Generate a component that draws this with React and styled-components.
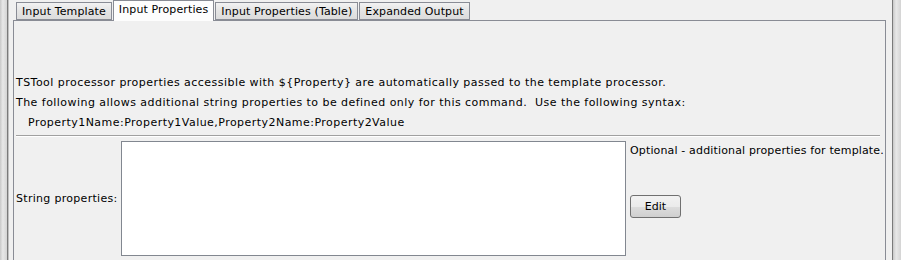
import React from "react";
import styled, { createGlobalStyle } from "styled-components";

const Global = createGlobalStyle`
  html, body {
    margin: 0;
    padding: 0;
    background: #f0f0f0;
  }
  body {
    font-family: "DejaVu Sans", "Liberation Sans", sans-serif;
    font-size: 11px;
    letter-spacing: 0.46px;
    color: #000;
  }
`;

const Frame = styled.div`
  display: flex;
  width: 901px;
  height: 260px;
  overflow: hidden;
  background: #f0f0f0;
`;

const EdgeStrip = styled.div`
  width: ${(p) => p.$w}px;
  flex: none;
  background: linear-gradient(to right, #c8c8c8, #e8e8e8 40%, #d4d4d4);
  border-${(p) => (p.$side === "left" ? "right" : "left")}: 1px solid #7a7a7a;
`;

const Gutter = styled.div`
  width: ${(p) => p.$w}px;
  flex: none;
  border-left: 1px solid #c0c0c0;
`;

const Main = styled.div`
  flex: 1;
  display: flex;
  flex-direction: column;
  min-width: 0;
`;

const TabBar = styled.div`
  display: flex;
  align-items: flex-end;
  height: 20px;
  padding-left: 3px;
  gap: 1px;
`;

const Tab = styled.div`
  box-sizing: border-box;
  height: ${(p) => (p.$active ? 21 : 18)}px;
  padding: 0 5px;
  display: flex;
  align-items: ${(p) => (p.$active ? "flex-start" : "center")};
  padding-top: ${(p) => (p.$active ? 2 : 0)}px;
  border: 1px solid #898c95;
  border-bottom: ${(p) => (p.$active ? "none" : "1px solid #898c95")};
  background: ${(p) =>
    p.$active ? "#fdfdfd" : "linear-gradient(#f2f2f2, #e4e4e4 50%, #dcdcdc)"};
  margin-bottom: ${(p) => (p.$active ? -1 : 0)}px;
  position: relative;
  z-index: ${(p) => (p.$active ? 1 : 0)};
  white-space: nowrap;
  letter-spacing: 0.12px;
`;

const Panel = styled.div`
  flex: 1;
  border: 1px solid #898c95;
  border-bottom: none;
  padding: 52px 3px 0 2px;
  display: flex;
  flex-direction: column;
  margin-right: 6px;
`;

const Line = styled.div`
  line-height: 20px;
  height: 20px;
  padding-left: ${(p) => p.$indent || 0}px;
  white-space: nowrap;
`;

const Separator = styled.div`
  height: 0;
  border-top: 1px solid #a0a0a0;
  border-bottom: 1px solid #ffffff;
  margin: 2px 2px 4px 0;
`;

const FieldRow = styled.div`
  display: flex;
  align-items: stretch;
`;

const Label = styled.div`
  flex: none;
  width: 105px;
  display: flex;
  align-items: center;
  white-space: nowrap;
  letter-spacing: 0.3px;
`;

const TextArea = styled.textarea`
  flex: none;
  width: 505px;
  height: 115px;
  box-sizing: border-box;
  border: 1px solid #828790;
  background: #fff;
  resize: none;
  margin: 0;
  font: inherit;
`;

const Side = styled.div`
  flex: none;
  display: flex;
  flex-direction: column;
  padding-left: 4px;
`;

const Hint = styled.div`
  padding-top: 3px;
  white-space: nowrap;
  letter-spacing: 0.15px;
`;

const Button = styled.button`
  margin-top: 38px;
  width: 51px;
  height: 23px;
  box-sizing: border-box;
  border: 1px solid #707070;
  border-radius: 3px;
  background: linear-gradient(#f2f2f2, #ebebeb 50%, #dddddd 51%, #cfcfcf);
  font: inherit;
  color: #000;
  padding: 0;
`;

export default function App() {
  return (
    <>
      <Global />
      <Frame>
        <EdgeStrip $w={7} $side="left" />
        <Gutter $w={4} />
        <Main>
          <TabBar>
            <Tab>Input Template</Tab>
            <Tab $active>Input Properties</Tab>
            <Tab>Input Properties (Table)</Tab>
            <Tab>Expanded Output</Tab>
          </TabBar>
          <Panel>
            <Line>
              TSTool processor properties accessible with ${"{"}Property{"}"} are
              automatically passed to the template processor.
            </Line>
            <Line>
              The following allows additional string properties to be defined
              only for this command.&nbsp; Use the following syntax:
            </Line>
            <Line $indent={12}>
              Property1Name:Property1Value,Property2Name:Property2Value
            </Line>
            <Separator />
            <FieldRow>
              <Label>String properties:</Label>
              <TextArea />
              <Side>
                <Hint>Optional - additional properties for template.</Hint>
                <Button>Edit</Button>
              </Side>
            </FieldRow>
          </Panel>
        </Main>
        <EdgeStrip $w={8} $side="right" />
      </Frame>
    </>
  );
}
